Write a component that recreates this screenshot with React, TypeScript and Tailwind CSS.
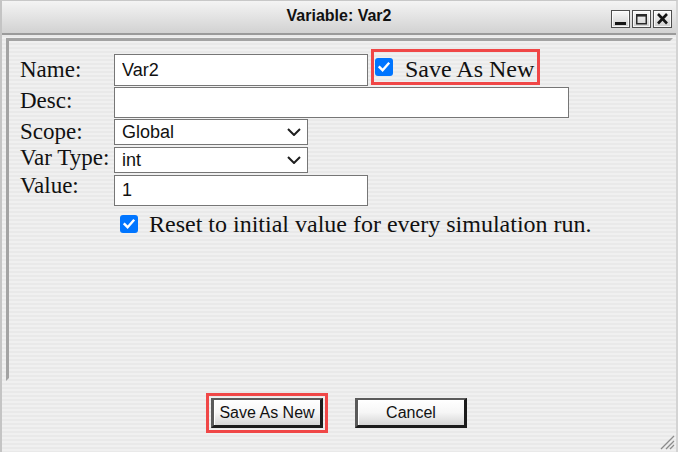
import React from "react";

const serif = "font-['Liberation_Serif','Times_New_Roman',serif]";
const sans = "font-['Liberation_Sans',Arial,sans-serif]";

function TitleButton({ kind }: { kind: "min" | "max" | "close" }) {
  const id = `tbg-${kind}`;
  return (
    <svg width="19" height="18" viewBox="0 0 19 18">
      <defs>
        <linearGradient id={id} x1="0" y1="0" x2="0" y2="1">
          <stop offset="0" stopColor="#fbfbfb" />
          <stop offset="1" stopColor="#cdcdcd" />
        </linearGradient>
      </defs>
      <rect x="0.5" y="0.5" width="18" height="17" fill={`url(#${id})`} stroke="#4e4e4e" />
      <rect x="1.5" y="1.5" width="16" height="15" fill="none" stroke="#ffffff" strokeOpacity="0.8" />
      {kind === "min" && <rect x="4" y="12" width="11" height="3" fill="#151515" />}
      {kind === "max" && (
        <g>
          <rect x="4.75" y="4.75" width="9.5" height="9" fill="none" stroke="#2a2a2a" strokeWidth="1.5" />
          <rect x="4" y="4" width="11" height="2.6" fill="#2a2a2a" />
        </g>
      )}
      {kind === "close" && (
        <path d="M5 4 L14 13.5 M14 4 L5 13.5" stroke="#151515" strokeWidth="2.6" fill="none" />
      )}
    </svg>
  );
}

function Check() {
  return (
    <span className="flex h-[18px] w-[18px] shrink-0 items-center justify-center rounded-[3px] bg-[#0075ff]">
      <svg width="14" height="14" viewBox="0 0 14 14">
        <path d="M2.6 7.2 L5.6 10.2 L11.4 3.6" stroke="#ffffff" strokeWidth="2.4" fill="none" strokeLinecap="square" />
      </svg>
    </span>
  );
}

function Select({ value }: { value: string }) {
  return (
    <div className={`flex h-[26px] w-[194px] items-center justify-between border border-[#767676] bg-white pl-[7px] pr-[6px] ${sans} text-[18px] leading-none text-[#111]`}>
      <span>{value}</span>
      <svg width="14" height="8" viewBox="0 0 14 8">
        <path d="M1 1 L7 7 L13 1" stroke="#1f1f1f" strokeWidth="2" fill="none" />
      </svg>
    </div>
  );
}

function TextInput({ value, w, h }: { value: string; w: string; h: string }) {
  return (
    <input
      readOnly
      value={value}
      className={`${w} ${h} border border-[#767676] bg-white px-[7px] ${sans} text-[18px] text-[#111] outline-none`}
    />
  );
}

function Label({ text, cls }: { text: string; cls: string }) {
  return (
    <div className={`w-[94px] shrink-0 whitespace-nowrap ${serif} text-[23px] leading-[23px] text-[#111] ${cls}`}>
      {text}
    </div>
  );
}

function Btn({ text, cls }: { text: string; cls?: string }) {
  return (
    <div
      className={`flex h-[30px] w-[112px] items-center justify-center border-b-[3px] border-l-[3px] border-r-[3px] border-t-2 border-b-[#1c1c1c] border-l-[#5a5a5a] border-r-[#1c1c1c] border-t-[#5a5a5a] bg-gradient-to-b from-[#ffffff] via-[#f6f6f6] to-[#d6d6d6] shadow-[inset_1px_1px_0_#ffffff] ${sans} text-[16px] leading-none text-[#111] ${cls ?? ""}`}
    >
      {text}
    </div>
  );
}

export default function App() {
  return (
    <div className="relative flex h-[452px] w-[678px] flex-col overflow-hidden border-l-2 border-r-2 border-t border-l-[#c4c4c4] border-r-[#d4d4d4] border-t-[#c8c8c8] bg-[repeating-linear-gradient(to_bottom,#f0f0f0_0px,#f0f0f0_2px,#e9e9e9_2px,#e9e9e9_4px)]">
      {/* Title bar */}
      <div className="grid h-[34px] shrink-0 grid-cols-[1fr_auto_1fr] items-center border-b-2 border-b-[#9a9a9a] bg-gradient-to-b from-[#f4f4f4] to-[#d2d2d2]">
        <div />
        <div className={`${sans} pb-[2px] text-[16px] font-bold leading-none text-[#111]`}>Variable: Var2</div>
        <div className="flex justify-end gap-[2px] pr-[4px] pt-[3px]">
          <TitleButton kind="min" />
          <TitleButton kind="max" />
          <TitleButton kind="close" />
        </div>
      </div>

      {/* Inset panel */}
      <div className="ml-[4px] mr-[3px] mt-[3px] h-[343px] shrink-0 border-[3px] border-b-transparent border-l-[#a3a3a3] border-r-transparent border-t-[#a3a3a3] pl-[11px] pt-[13px]">
        <div className="flex flex-col">
          <div className="flex items-start">
            <Label text="Name:" cls="mt-[4px]" />
            <TextInput value="Var2" w="w-[254px]" h="h-[32px]" />
            <div className="-mt-[5px] ml-[3px] flex h-[36px] w-[169px] items-center border-[3px] border-[#f04747] pl-[1px]">
              <Check />
              <span className={`ml-[12px] mt-[3px] whitespace-nowrap ${serif} text-[24px] leading-[24px] text-[#111]`}>Save As New</span>
            </div>
          </div>
          <div className="mt-[1px] flex items-start">
            <Label text="Desc:" cls="mt-[2px]" />
            <TextInput value="" w="w-[455px]" h="h-[31px]" />
          </div>
          <div className="mt-[1px] flex items-start">
            <Label text="Scope:" cls="mt-[1px]" />
            <Select value="Global" />
          </div>
          <div className="mt-[2px] flex items-start">
            <Label text="Var Type:" cls="-mt-[1px]" />
            <Select value="int" />
          </div>
          <div className="mt-[2px] flex items-start">
            <Label text="Value:" cls="-mt-[1px]" />
            <TextInput value="1" w="w-[254px]" h="h-[31px]" />
          </div>
          <div className="mt-[6px] flex items-center pl-[100px]">
            <Check />
            <span className={`ml-[11px] whitespace-nowrap ${serif} text-[24px] leading-[24px] text-[#111]`}>
              Reset to initial value for every simulation run.
            </span>
          </div>
        </div>
      </div>

      {/* Buttons */}
      <div className="mt-[12px] flex items-start justify-center gap-[27px] pr-[5px]">
        <div className="border-[3px] border-[#f04747] p-[2px]">
          <Btn text="Save As New" />
        </div>
        <Btn text="Cancel" cls="mt-[5px]" />
      </div>

      {/* Resize grip */}
      <svg className="absolute bottom-[2px] right-[1px]" width="17" height="17" viewBox="0 0 17 17">
        <path d="M16 3 L3 16 M16 8 L8 16 M16 12 L12 16" stroke="#8c8c8c" strokeWidth="1.3" fill="none" />
      </svg>
    </div>
  );
}
